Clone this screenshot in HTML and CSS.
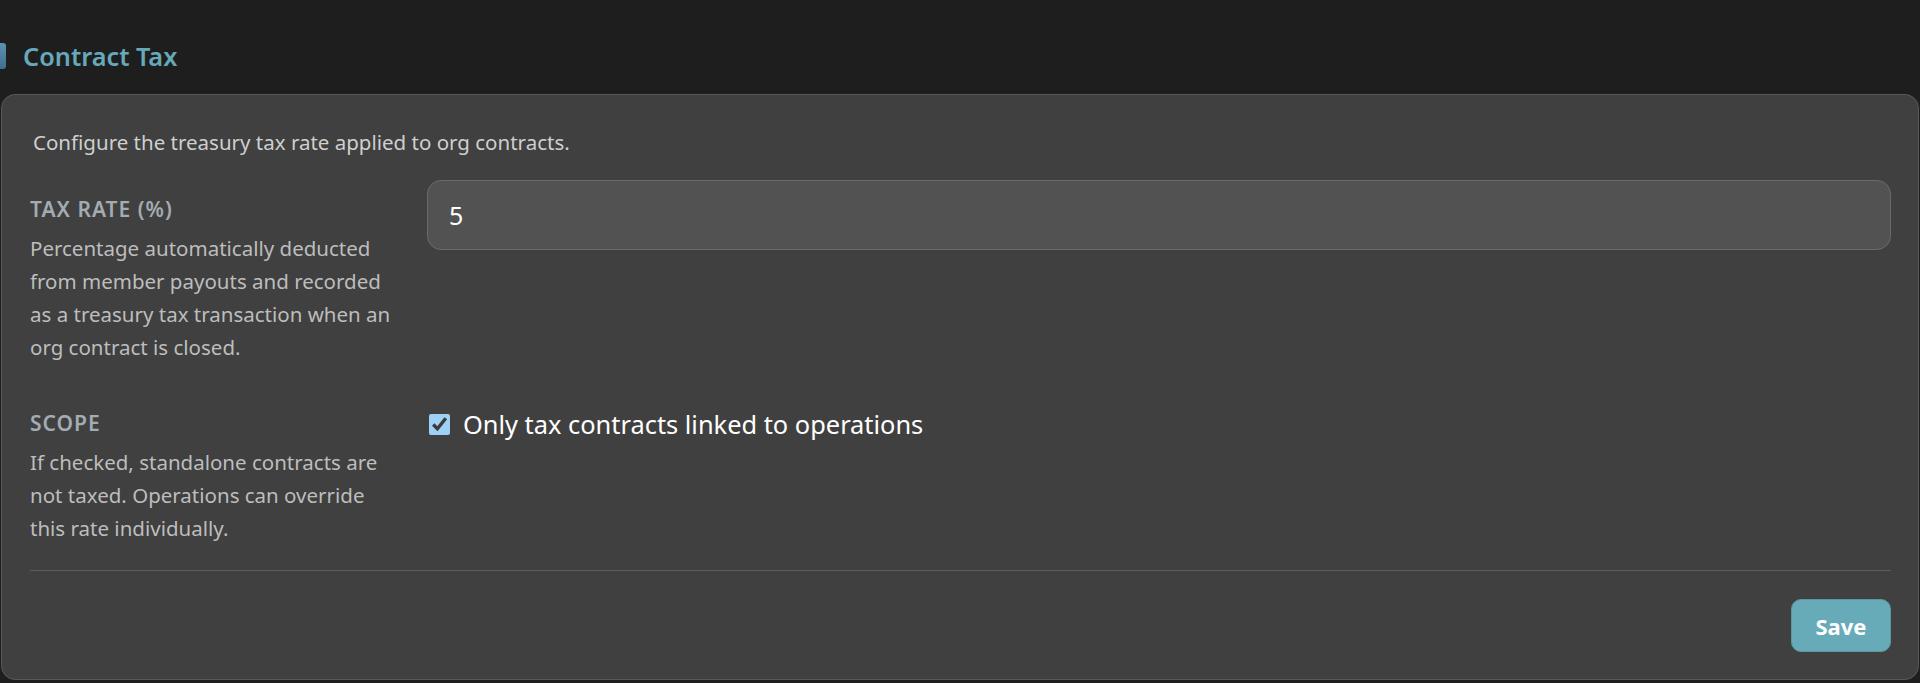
FILE: index.html
```html
<!doctype html>
<html>
<head>
<meta charset="UTF-8">
<title>Contract Tax</title>
<link rel="stylesheet" href="styles.css">
</head>
<body>
  <section class="panel">
    <h2 class="panel-title">Contract Tax</h2>
    <div class="card">
      <p class="card-intro">Configure the treasury tax rate applied to org contracts.</p>
      <div class="field">
        <div class="field-info">
          <label class="field-label" for="taxRate">Tax rate (%)</label>
          <p class="field-help">Percentage automatically deducted from member payouts and recorded as a treasury tax transaction when an org contract is closed.</p>
        </div>
        <div class="field-control">
          <input class="text-input" id="taxRate" type="text" value="5">
        </div>
      </div>
      <div class="field">
        <div class="field-info">
          <span class="field-label">Scope</span>
          <p class="field-help">If checked, standalone contracts are not taxed. Operations can override this rate individually.</p>
        </div>
        <div class="field-control">
          <label class="check">
            <input type="checkbox" checked>
            <span>Only tax contracts linked to operations</span>
          </label>
        </div>
      </div>
      <div class="card-footer">
        <button class="btn-save" type="button">Save</button>
      </div>
    </div>
  </section>
</body>
</html>
```
FILE: styles.css
```css
html, body {
  margin: 0;
  padding: 0;
}
body {
  background-color: #1e1e1e;
  font-family: "Noto Sans", "Open Sans", sans-serif;
  color: #e6e6e6;
}
.panel {
  padding-top: 43px;
}
/* title with accent bar */
.panel-title {
  margin: 0 0 25px 0;
  height: 26px;
  display: flex;
  align-items: center;
  gap: 17px;
  font-size: 25.3px;
  font-weight: 600;
  color: #67a9ba;
}
.panel-title:before {
  content: '';
  width: 6px;
  height: 26px;
  border-radius: 0 3px 3px 0;
  background: linear-gradient(#5b93b0, #3f6f8d);
}
/* card */
.card {
  margin: 0 1px;
  background-color: #404040;
  border: 1px solid #585858;
  border-radius: 14px;
  padding: 33px 27px 27px 28px;
}
.card-intro {
  margin: 0 0 24px 3px;
  font-size: 20.5px;
  line-height: 28px;
  color: #cfcfcf;
}
.field {
  display: grid;
  grid-template-columns: 1fr 4fr;
  column-gap: 31px;
  margin-bottom: 30px;
}
.field + .field {
  margin-bottom: 25px;
}
.field-label {
  display: block;
  padding-top: 17px;
  font-size: 21px;
  line-height: 24px;
  font-weight: 600;
  text-transform: uppercase;
  letter-spacing: 1px;
  color: #a3abb3;
}
.field-help {
  margin: 11px 0 0 0;
  font-size: 20.5px;
  line-height: 33px;
  color: #bdbdbd;
}
.text-input {
  box-sizing: border-box;
  width: 100%;
  height: 70px;
  padding: 0 21px;
  font-family: inherit;
  font-size: 25px;
  color: #fff;
  background-color: #525252;
  border: 1px solid #6a6a6a;
  border-radius: 14px;
  outline: none;
}
.check {
  display: flex;
  align-items: center;
  gap: 13px;
  padding-top: 14px;
  font-size: 25.4px;
  line-height: 32px;
  color: #fff;
}
.check input {
  width: 21px;
  height: 21px;
  margin: 0 0 0 2px;
  accent-color: #9fd0f5;
}
.card-footer {
  border-top: 1px solid #5c5c5c;
  padding-top: 28px;
  display: flex;
  justify-content: flex-end;
}
.btn-save {
  width: 100px;
  height: 53px;
  font-family: inherit;
  font-size: 22px;
  font-weight: 700;
  color: #fff;
  background-color: #67abb9;
  border: 1px solid #5a98a6;
  border-radius: 10px;
}
```
